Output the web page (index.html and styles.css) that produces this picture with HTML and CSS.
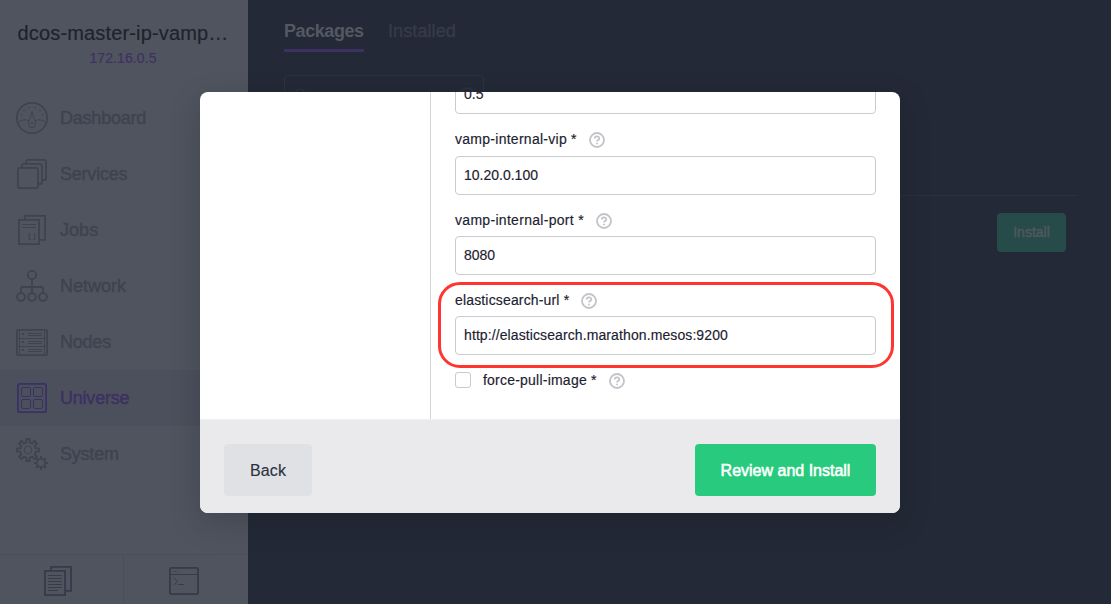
FILE: index.html
```
<!DOCTYPE html>
<html lang="en">
<head>
<meta charset="utf-8">
<title>Universe</title>
<link rel="stylesheet" href="styles.css">
</head>
<body>
<div class="app">
  <aside class="sidebar">
    <header class="cluster">
      <div class="cluster-name">dcos-master-ip-vamp…</div>
      <div class="cluster-ip">172.16.0.5</div>
    </header>
    <nav class="nav">
      <a class="nav-item"><svg class="icon" viewBox="0 0 32 32"><circle cx="16" cy="16" r="15.2" stroke-width="1.7"/><path stroke-width="1" d="M2.500 20.500Q7.500 16 12.800 18.800M29.500 20.500Q24.500 16 19.200 18.800M16 9.500C15.500 14 12.500 18 12.500 22a3.500 3.500 0 0 0 7 0C19.500 18 16.500 14 16 9.500z"/><circle class="solid" cx="16" cy="21" r="1.100"/><path stroke-width="1.300" d="M5 13h1.200M7.500 8.500h1.200M12.300 5.500h1.200M18.500 5.500h1.200M23.300 8.500h1.200M26 13h1.200"/></svg><span class="label">Dashboard</span></a>
      <a class="nav-item"><svg class="icon" viewBox="0 0 32 32" stroke-width="1.800"><rect x="1.900" y="9.900" width="20.200" height="20.200" rx="2"/><path d="M5.900 9V7.900a2 2 0 0 1 2-2H24a2 2 0 0 1 2 2V24a2 2 0 0 1-2 2h-1.500M9.900 5V3.900a2 2 0 0 1 2-2h16.200a2 2 0 0 1 2 2V20a2 2 0 0 1-2 2h-1.600"/></svg><span class="label">Services</span></a>
      <a class="nav-item"><svg class="icon" viewBox="0 0 32 32" stroke-width="1.800"><path d="M2.900 5.900h20.200v24.200H2.900zM9 5V1.900h20.100v24H24"/><path stroke-width="1" d="M6 10.500h14M6 13.500h14"/><path stroke-width="1.100" d="M14.700 19.500h-.7q-.7 0-.7.800v1.200q0 1-1 1 1 0 1 1v1.200q0 .8.700.8h.7M17.300 19.500h.7q.7 0 .7.800v1.200q0 1 1 1-1 0-1 1v1.200q0 .8-.7.800h-.7"/></svg><span class="label jobs">Jobs</span></a>
      <a class="nav-item"><svg class="icon" viewBox="0 0 32 32" stroke-width="1.800"><circle cx="16" cy="5" r="4.200"/><circle cx="5" cy="27" r="3.900"/><circle cx="16" cy="27" r="3.900"/><circle cx="27" cy="27" r="3.900"/><path d="M16 9v14M5 23v-4.500a1.500 1.500 0 0 1 1.500-1.500h19a1.500 1.500 0 0 1 1.500 1.500V23"/></svg><span class="label network">Network</span></a>
      <a class="nav-item"><svg class="icon" viewBox="0 0 32 32"><rect x=".9" y="3.900" width="30.200" height="25.200" rx="1" stroke-width="1.800"/><path stroke-width="1" d="M3.500 4v24M28.500 4v24M1 12.500h30M1 20.500h30M12 7.500h14M12 9.500h14M12 15.500h14M12 17.500h14M12 23.500h14M12 25.500h14"/><path stroke-width="2" d="M6 8h2M6 16h2M6 24h2"/></svg><span class="label">Nodes</span></a>
      <a class="nav-item active"><svg class="icon" viewBox="0 0 32 32"><rect x="1.900" y="1.900" width="28.200" height="28.200" rx="1.700" stroke-width="1.800"/><g stroke-width="1"><rect x="5.500" y="5.500" width="9" height="9" rx="1.500"/><rect x="17.500" y="5.500" width="9" height="9" rx="1.500"/><rect x="5.500" y="17.500" width="9" height="9" rx="1.500"/><rect x="17.500" y="17.500" width="9" height="9" rx="1.500"/></g></svg><span class="label">Universe</span></a>
      <a class="nav-item"><svg class="icon" viewBox="0 0 32 32" stroke-width="1.800" stroke-linejoin="round"><path d="M10.300 1h3.400v3.300l2.500 1 2.300-2.300L21 5.500l-2.300 2.300 1 2.500H23v3.400h-3.300l-1 2.500 2.300 2.300-2.500 2.500-2.300-2.300-2.500 1V23h-3.400v-3.300l-2.500-1L5.500 21 3 18.500l2.300-2.300-1-2.500H1v-3.400h3.300l1-2.500L3 5.500 5.500 3l2.300 2.300 2.500-1z"/><circle cx="12" cy="12" r="3.900" stroke-width="1"/><circle cx="25" cy="25" r="4.200"/><path d="M25 20.500V18M25 32v-2.500M20.500 25H18M32 25h-2.500M21.800 21.800 20 20M30 20l-1.800 1.800M20 30l1.800-1.800M28.200 28.200 30 30"/></svg><span class="label">System</span></a>
    </nav>
    <footer class="side-footer">
      <div class="side-action logs"><svg class="icon" viewBox="0 0 32 32" stroke-width="1.800"><path d="M2.900 5.900h20.200v24.200H2.900zM9 5V1.900h20.100v24H24"/><path stroke-width="1" d="M6 10.500h14M6 13.500h14M6 16.500h14M6 19.500h14M6 22.500h14M6 25.500h10"/></svg></div>
      <div class="side-action"><svg class="icon" viewBox="0 0 32 32"><rect x="1.900" y="2.900" width="28.200" height="26.200" rx="1.500" stroke-width="1.800"/><path stroke-width="1" d="M2 9.500h28M5 6.500h1M7 6.500h1M9 6.500h1M6 13l3.500 3.500L6 20M10 19.500h6"/></svg></div>
    </footer>
  </aside>
  <main class="main">
    <div class="tabs"><a class="tab current">Packages</a><a class="tab">Installed</a></div>
    <div class="search"><svg class="mini" viewBox="0 0 16 16"><circle cx="7" cy="7" r="5"/><path d="m11 11 4 4"/></svg><svg class="mini" viewBox="0 0 16 16"><circle cx="8" cy="8" r="7"/></svg></div>
    <div class="package-row"><button class="install">Install</button></div>
  </main>
</div>
<section class="modal" role="dialog">
  <div class="modal-body">
    <div class="sections"></div>
    <form class="form">
      <div class="input">0.5</div>
      <div class="field-label tall"><span class="vip">vamp-internal-vip *</span><svg class="help" viewBox="0 0 16 16"><circle cx="8" cy="8" r="7"/><path d="M5.700 6.600C5.700 3.600 10.300 3.700 10.300 6.400 10.300 8 8 7.900 8 9.500M8 10.700v1.600"/></svg></div>
      <div class="input">10.20.0.100</div>
      <div class="field-label"><span class="port">vamp-internal-port *</span><svg class="help" viewBox="0 0 16 16"><circle cx="8" cy="8" r="7"/><path d="M5.700 6.600C5.700 3.600 10.300 3.700 10.300 6.400 10.300 8 8 7.900 8 9.500M8 10.700v1.600"/></svg></div>
      <div class="input">8080</div>
      <div class="field-label"><span class="elastic">elasticsearch-url *</span><svg class="help" viewBox="0 0 16 16"><circle cx="8" cy="8" r="7"/><path d="M5.700 6.600C5.700 3.600 10.300 3.700 10.300 6.400 10.300 8 8 7.900 8 9.500M8 10.700v1.600"/></svg></div>
      <div class="input"><span class="url">http://elasticsearch.marathon.mesos:9200</span></div>
      <div class="check-row"><span class="checkbox"></span><span class="force">force-pull-image *</span><svg class="help" viewBox="0 0 16 16"><circle cx="8" cy="8" r="7"/><path d="M5.700 6.600C5.700 3.600 10.300 3.700 10.300 6.400 10.300 8 8 7.900 8 9.500M8 10.700v1.600"/></svg></div>
    </form>
  </div>
  <footer class="modal-footer"><button class="btn back">Back</button><button class="btn review">Review and Install</button></footer>
</section>
<div class="highlight"></div>
</body>
</html>
```
FILE: styles.css
```
* { box-sizing: border-box; }
body { margin: 0; font-family: "Liberation Sans", Arial, sans-serif; overflow: hidden; }
button { font-family: inherit; border: 0; padding: 0; }
svg { fill: none; stroke: currentColor; display: block; flex: none; }
.solid { fill: currentColor; stroke: none; }
.app { display: flex; width: 1111px; height: 604px; }

.sidebar { width: 248px; background: #50545f; color: #3f4350; display: flex; flex-direction: column; }
.cluster { height: 90px; padding: 21px 2px 0 0; text-align: center; white-space: nowrap; }
.cluster-name { font-size: 20px; line-height: 24px; color: #1d222d; letter-spacing: 0.15px; -webkit-text-stroke: 0.15px currentColor; }
.cluster-ip { font-size: 14px; line-height: 17px; margin-top: 5px; color: #3d3262; letter-spacing: 0.1px; -webkit-text-stroke: 0.2px currentColor; }
.nav { flex: 1; }
.nav-item { display: flex; align-items: center; height: 56px; padding-left: 16px; gap: 12px; font-size: 18px; }
.icon { width: 32px; height: 32px; }
.label { -webkit-text-stroke: 0.45px currentColor; letter-spacing: -0.22px; }
.network { letter-spacing: 0; }
.jobs { letter-spacing: 0.05px; }
.active { background: #4c505c; color: #3d3062; }
.side-footer { display: flex; height: 50px; border-top: 1px solid #4a4e59; color: #363a49; }
.side-action { flex: 1; display: flex; justify-content: center; padding: 10px 4px 0 0; }
.logs { flex: 0 0 123px; padding-right: 7px; }
.side-action + .side-action { border-left: 1px solid #4a4e59; }

.main { flex: 1; background: #232936; padding: 18px 33px 0 36px; }
.tabs { display: flex; gap: 24px; font-size: 18px; line-height: 26px; }
.tab { height: 34px; color: #363b48; -webkit-text-stroke: 0.45px currentColor; white-space: nowrap; letter-spacing: 0.1px; }
.current { width: 80px; border-bottom: 3px solid #3c3160; color: #545862; font-weight: bold; letter-spacing: -0.42px; -webkit-text-stroke: 0; }
.search { width: 200px; height: 39px; margin-top: 23px; border: 1px solid #2c323e; border-radius: 4px; display: flex; justify-content: space-between; padding: 11px 8px; color: #2d323f; }
.mini { width: 16px; height: 16px; stroke-width: 1.5; }
.package-row { margin-top: 81px; border-top: 1px solid #2b303d; padding: 17px 12px 0; display: flex; justify-content: flex-end; }
.install { width: 69px; height: 39px; border-radius: 4px; background: #264b48; color: #505761; font-size: 14px; padding-bottom: 1px; -webkit-text-stroke: 0.5px currentColor; }

.modal { position: absolute; left: 200px; top: 92px; width: 700px; height: 421px; border-radius: 8px; overflow: hidden; background: #fff; box-shadow: 0 10px 30px rgba(20, 25, 30, 0.22); color: #1b2130; }
.modal-body { display: flex; height: 327px; overflow: hidden; }
.sections { width: 231px; border-right: 1px solid #d3d4d8; }
.form { flex: 1; height: 327px; padding: 0 24px 14px; display: flex; flex-direction: column; justify-content: flex-end; font-size: 14px; white-space: nowrap; -webkit-text-stroke: 0.15px currentColor; }
.input { flex: none; height: 39px; border: 1px solid #cacbce; border-radius: 4px; padding: 0 8px 2px; display: flex; align-items: center; }
.field-label { flex: none; height: 41px; display: flex; align-items: center; padding-top: 8px; }
.tall { height: 42px; }
.help { width: 16px; height: 16px; margin: 2px 0 0 12px; color: #c3c4ca; stroke-width: 1.8; }
.vip { letter-spacing: 0.27px; }
.port { letter-spacing: 0.3px; }
.elastic { letter-spacing: 0.16px; }
.force { letter-spacing: 0.22px; }
.url { letter-spacing: 0.1px; }
.check-row { flex: none; height: 50px; display: flex; align-items: center; }
.checkbox { width: 16px; height: 16px; border: 1px solid #cacbce; border-radius: 3px; margin-right: 12px; }
.modal-footer { height: 94px; background: #eaeaec; border-top: 1px solid #f0f0f1; padding: 24px 24px 0; display: flex; justify-content: space-between; }
.btn { height: 52px; border-radius: 4px; font-size: 16px; padding-top: 1px; }
.back { width: 88px; background: #dfe1e5; color: #2b3142; letter-spacing: 0.15px; -webkit-text-stroke: 0.15px currentColor; }
.review { width: 181px; background: #28cb7d; color: #fff; -webkit-text-stroke: 0.55px #fff; }
.highlight { position: absolute; left: 438px; top: 282px; width: 456px; height: 86px; border: 3px solid #ff352f; border-radius: 22px; pointer-events: none; }
```
